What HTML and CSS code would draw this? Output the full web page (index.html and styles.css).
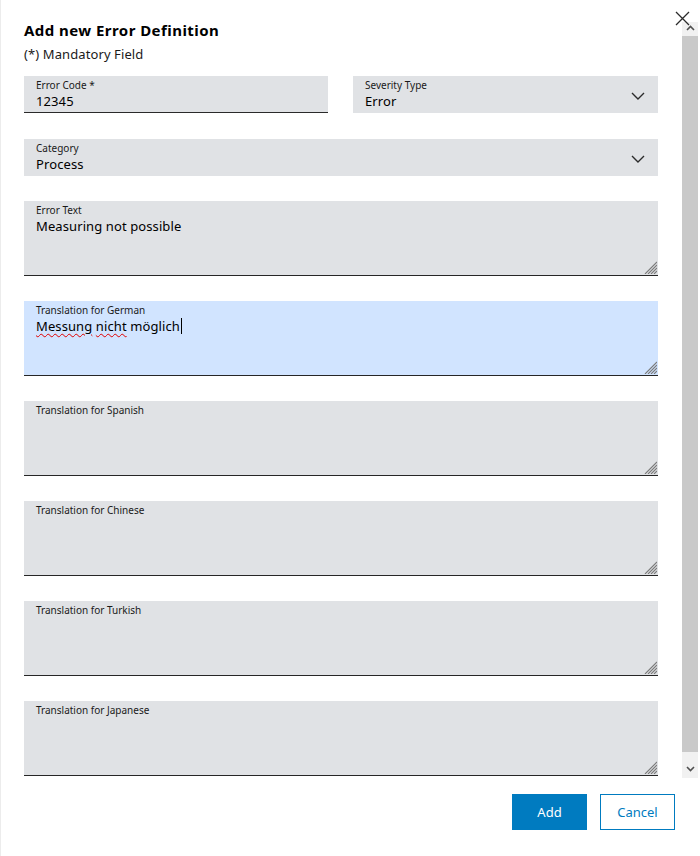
FILE: index.html
```html
<!DOCTYPE html>
<html lang="en">
<head>
<meta charset="utf-8">
<title>Add new Error Definition</title>
<link rel="stylesheet" href="styles.css">
</head>
<body>
<div class="dialog">
  <button class="close" aria-label="Close">
    <svg width="15" height="15" viewBox="0 0 15 15"><path d="M1 1 L14 14 M14 1 L1 14" stroke="#2b2b2b" stroke-width="1.3" fill="none"/></svg>
  </button>
  <div class="scroll-area">
    <div class="content">
      <h1 class="title">Add new Error Definition</h1>
      <p class="subtitle">(*) Mandatory Field</p>

      <div class="row">
        <div class="field input">
          <span class="label">Error Code *</span>
          <span class="value">12345</span>
        </div>
        <div class="field select">
          <div class="select-text">
            <span class="label">Severity Type</span>
            <span class="value">Error</span>
          </div>
          <svg class="chevron" width="14" height="8" viewBox="0 0 14 8"><polyline points="1,1 7,7 13,1" stroke="#2b2b2b" stroke-width="1.4" fill="none"/></svg>
        </div>
      </div>

      <div class="field select wide">
        <div class="select-text">
          <span class="label">Category</span>
          <span class="value">Process</span>
        </div>
        <svg class="chevron" width="14" height="8" viewBox="0 0 14 8"><polyline points="1,1 7,7 13,1" stroke="#2b2b2b" stroke-width="1.4" fill="none"/></svg>
      </div>

      <div class="field area">
        <span class="label">Error Text</span>
        <span class="value">Measuring not possible</span>
        <svg class="grip" width="13" height="13" viewBox="0 0 13 13"><path d="M13 1 L1 13 M13 4 L4 13 M13 7 L7 13 M13 10 L10 13" stroke="#7a7a7a" stroke-width="1.1" fill="none"/></svg>
      </div>

      <div class="field area focused">
        <span class="label">Translation for German</span>
        <span class="value"><span class="misspelled">Messung</span> <span class="misspelled">nicht</span> möglich<span class="caret"></span></span>
        <svg class="grip" width="13" height="13" viewBox="0 0 13 13"><path d="M13 1 L1 13 M13 4 L4 13 M13 7 L7 13 M13 10 L10 13" stroke="#7a7a7a" stroke-width="1.1" fill="none"/></svg>
      </div>

      <div class="field area">
        <span class="label">Translation for Spanish</span>
        <svg class="grip" width="13" height="13" viewBox="0 0 13 13"><path d="M13 1 L1 13 M13 4 L4 13 M13 7 L7 13 M13 10 L10 13" stroke="#7a7a7a" stroke-width="1.1" fill="none"/></svg>
      </div>

      <div class="field area">
        <span class="label">Translation for Chinese</span>
        <svg class="grip" width="13" height="13" viewBox="0 0 13 13"><path d="M13 1 L1 13 M13 4 L4 13 M13 7 L7 13 M13 10 L10 13" stroke="#7a7a7a" stroke-width="1.1" fill="none"/></svg>
      </div>

      <div class="field area">
        <span class="label">Translation for Turkish</span>
        <svg class="grip" width="13" height="13" viewBox="0 0 13 13"><path d="M13 1 L1 13 M13 4 L4 13 M13 7 L7 13 M13 10 L10 13" stroke="#7a7a7a" stroke-width="1.1" fill="none"/></svg>
      </div>

      <div class="field area">
        <span class="label">Translation for Japanese</span>
        <svg class="grip" width="13" height="13" viewBox="0 0 13 13"><path d="M13 1 L1 13 M13 4 L4 13 M13 7 L7 13 M13 10 L10 13" stroke="#7a7a7a" stroke-width="1.1" fill="none"/></svg>
      </div>
    </div>

    <div class="scrollbar">
      <div class="sb-btn sb-up">
        <svg width="9" height="6" viewBox="0 0 9 6"><polyline points="1,5 4.5,1.5 8,5" stroke="#505050" stroke-width="1.6" fill="none"/></svg>
      </div>
      <div class="sb-thumb"></div>
      <div class="sb-btn sb-down">
        <svg width="9" height="6" viewBox="0 0 9 6"><polyline points="1,1 4.5,4.5 8,1" stroke="#505050" stroke-width="1.6" fill="none"/></svg>
      </div>
    </div>
  </div>

  <div class="footer">
    <button class="btn primary">Add</button>
    <button class="btn secondary">Cancel</button>
  </div>
</div>
</body>
</html>
```

FILE: styles.css
```css
html, body {
  margin: 0;
  padding: 0;
  background: #ffffff;
}

body {
  font-family: "Noto Sans", "Open Sans", "Liberation Sans", sans-serif;
  color: #000000;
}

.dialog {
  position: relative;
  width: 700px;
  height: 856px;
  box-sizing: border-box;
  border-left: 1px solid #ececec;
  display: flex;
  flex-direction: column;
  background: #ffffff;
}

.close {
  position: absolute;
  top: 11px;
  right: 10px;
  width: 15px;
  height: 15px;
  padding: 0;
  margin: 0;
  border: none;
  background: transparent;
  display: flex;
  z-index: 2;
}

.scroll-area {
  display: flex;
  height: 778px;
}

.content {
  flex: 1;
  padding: 20px 0 0 23px;
}

.title {
  margin: 0;
  font-size: 15px;
  line-height: 20px;
  font-weight: 700;
  letter-spacing: 0.45px;
}

.subtitle {
  margin: 4px 0 0 0;
  font-size: 13px;
  line-height: 20px;
  letter-spacing: 0.1px;
  color: #1a1a1a;
}

.row {
  margin-top: 12px;
  display: grid;
  grid-template-columns: 304px 305px;
  column-gap: 25px;
  width: 634px;
}

.field {
  position: relative;
  box-sizing: border-box;
  background: #e0e2e5;
  padding: 3px 12px 0 12px;
}

.label {
  display: block;
  font-size: 10px;
  line-height: 12px;
  color: #1a1a1a;
}

.value {
  display: block;
  margin-top: 1px;
  font-size: 13px;
  line-height: 18px;
  letter-spacing: 0.1px;
  color: #000000;
}

.input {
  height: 37px;
  border-bottom: 1px solid #2a2a2a;
}

.select {
  height: 37px;
  display: flex;
  align-items: flex-start;
  justify-content: space-between;
  padding-right: 13px;
}

.chevron {
  align-self: center;
}

.wide {
  width: 634px;
  margin-top: 26px;
}

.area {
  width: 634px;
  height: 75px;
  margin-top: 25px;
  border-bottom: 1px solid #262626;
}

.focused {
  background: #d1e4ff;
}

.grip {
  position: absolute;
  right: 1px;
  bottom: 1px;
}

.misspelled {
  text-decoration: underline wavy #e00000;
  text-decoration-thickness: 1px;
  text-underline-offset: 2px;
}

.caret {
  display: inline-block;
  width: 1px;
  height: 16px;
  background: #000000;
  vertical-align: -3px;
  margin-left: 1px;
}

.scrollbar {
  width: 16px;
  height: 756px;
  margin: 22px 2px 0 0;
  display: flex;
  flex-direction: column;
  background: #f1f1f1;
}

.sb-btn {
  display: flex;
  justify-content: center;
  background: #f1f1f1;
}

.sb-up {
  height: 14px;
  align-items: flex-start;
  box-sizing: border-box;
  padding-top: 3px;
}

.sb-down {
  height: 26px;
  align-items: flex-end;
  box-sizing: border-box;
  padding-bottom: 6px;
}

.sb-thumb {
  flex: 1;
  background: #c9c9c9;
}

.footer {
  display: flex;
  justify-content: flex-end;
  gap: 13px;
  padding: 16px 25px 0 0;
}

.btn {
  width: 75px;
  height: 36px;
  box-sizing: border-box;
  font-family: "Noto Sans", "Open Sans", "Liberation Sans", sans-serif;
  font-size: 13px;
  line-height: 18px;
  padding: 0;
  margin: 0;
  cursor: pointer;
}

.primary {
  background: #007bc0;
  color: #ffffff;
  border: 1px solid #007bc0;
}

.secondary {
  background: #ffffff;
  color: #007bc0;
  border: 1px solid #007bc0;
}
```
